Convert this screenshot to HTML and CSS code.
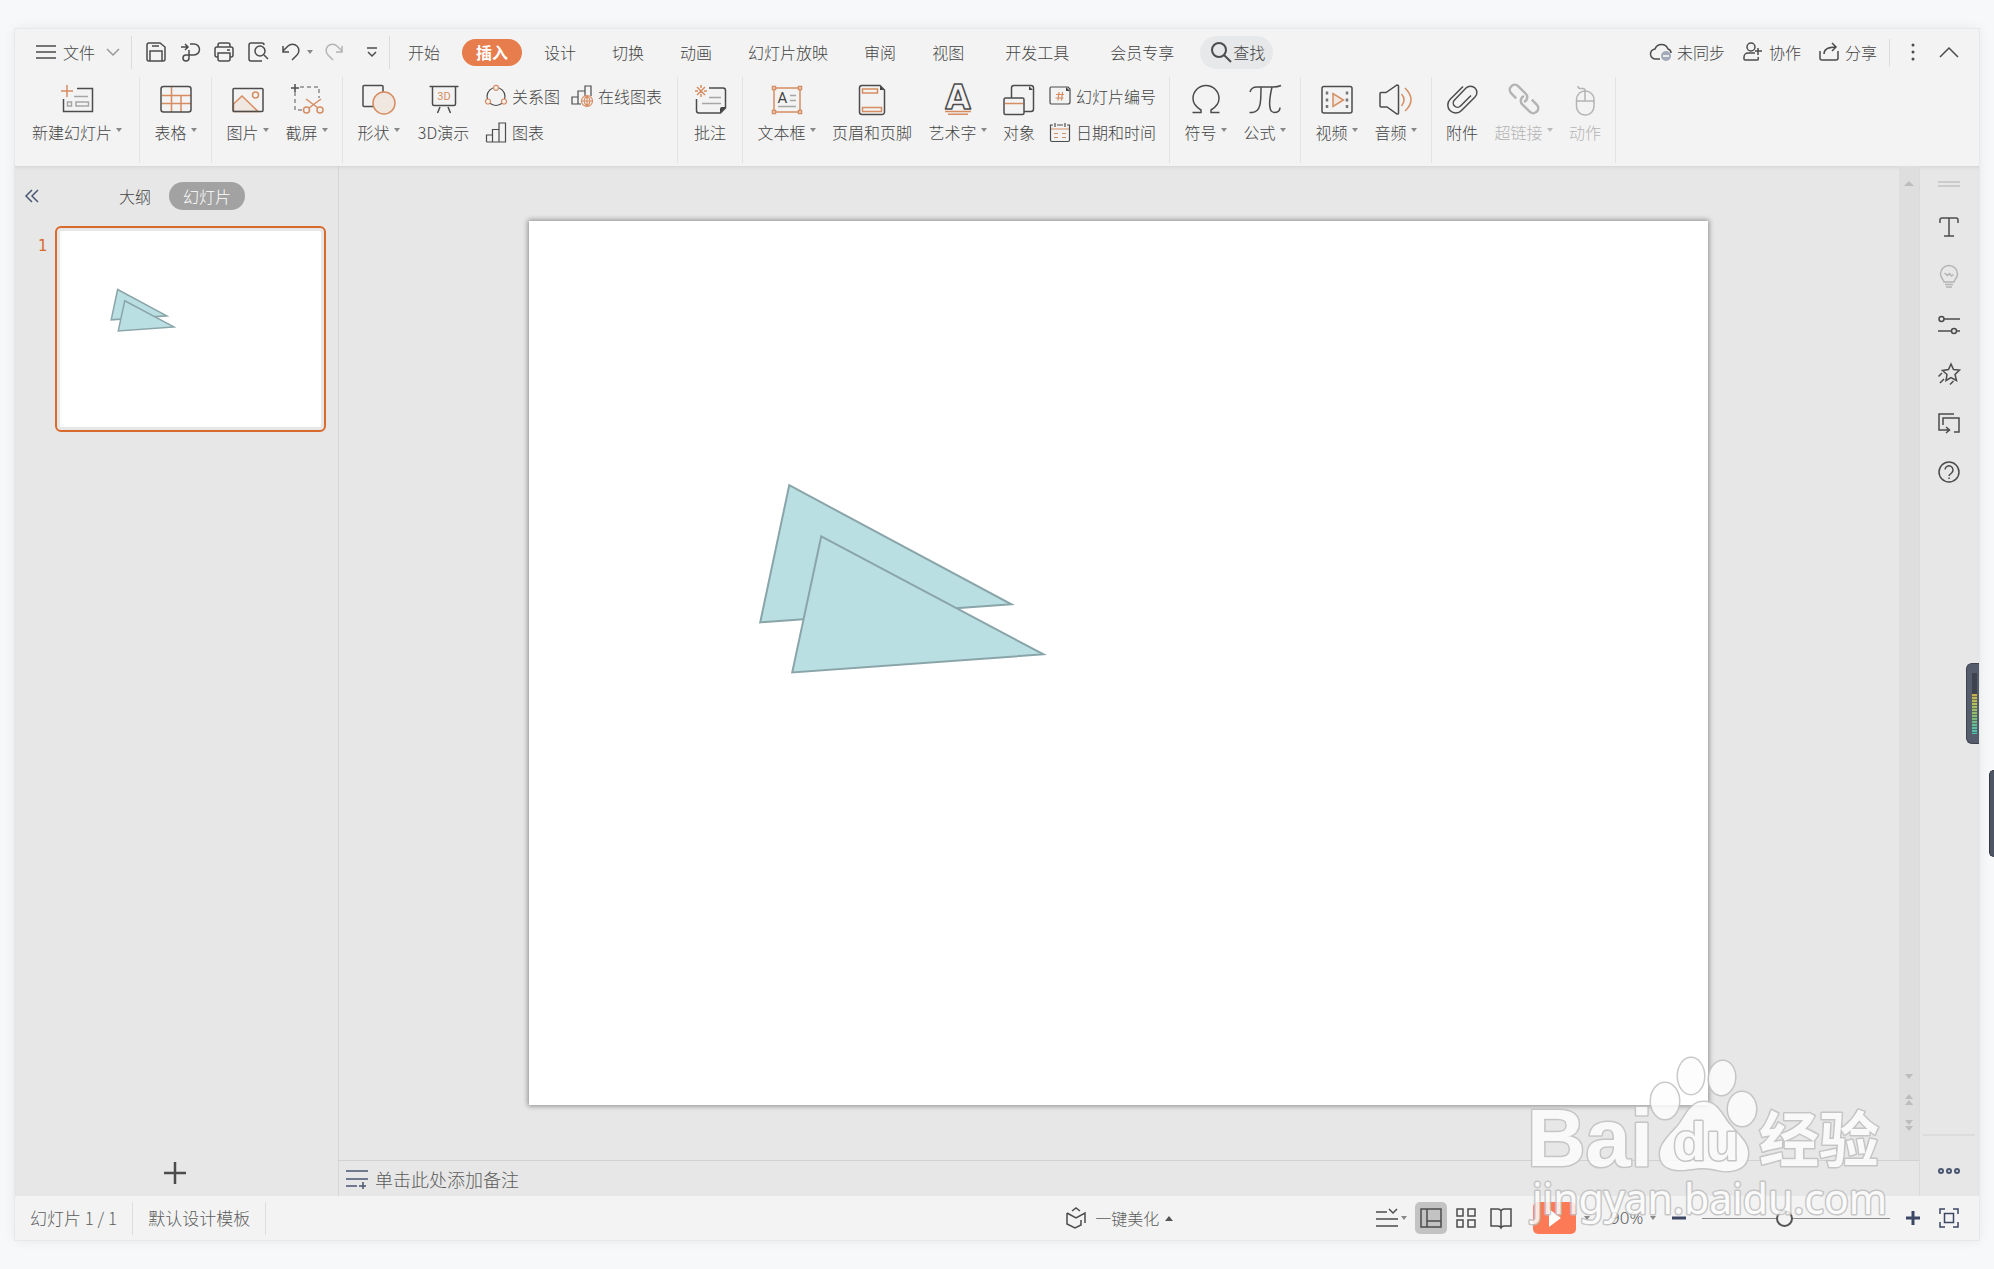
FILE: index.html
```html
<!DOCTYPE html>
<html lang="zh-CN">
<head>
  <meta charset="UTF-8">
  <meta name="viewport" content="width=device-width, initial-scale=1.0">
  <title>演示文稿</title>
  <link rel="stylesheet" href="styles.css">
</head>
<body>
  <div class="app">
    <!-- Menu bar -->
    <header class="menubar">
      <button class="file-menu">
        <svg width="20" height="20" viewBox="0 0 20 20"><path d="M0 4h20M0 10h20M0 16h20"/></svg>
        <span>文件</span>
        <svg class="chevron" width="14" height="10" viewBox="0 0 14 10"><path d="M1 2l6 6 6-6"/></svg>
      </button>
      <span class="divider"></span>
      <div class="quick">
        <button aria-label="保存"><svg width="20" height="20" viewBox="0 0 20 20"><path d="M3 1h11l5 4v12a2 2 0 0 1-2 2H3a2 2 0 0 1-2-2V3a2 2 0 0 1 2-2zM4 19V9h12v10M6 4h7"/></svg></button>
        <button aria-label="输出为PDF"><svg width="20" height="20" viewBox="0 0 20 20"><path d="M1 5h7M5 2l3 3-3 3M10 2h4a5.500 5.500 0 0 1 0 11H6a3 3 0 1 0 3 3V8"/></svg></button>
        <button aria-label="打印"><svg width="20" height="20" viewBox="0 0 20 20"><path d="M4 5V3a2 2 0 0 1 2-2h8a2 2 0 0 1 2 2v2M4 15H3a2 2 0 0 1-2-2V7a2 2 0 0 1 2-2h14a2 2 0 0 1 2 2v6a2 2 0 0 1-2 2h-1M4 11h12v6a2 2 0 0 1-2 2H6a2 2 0 0 1-2-2zM13 8h3"/></svg></button>
        <button aria-label="打印预览"><svg width="20" height="20" viewBox="0 0 20 20"><path d="M16 3a2 2 0 0 0-2-2H3a2 2 0 0 0-2 2v14a2 2 0 0 0 2 2h11M16 13l4 4"/><circle cx="12" cy="9" r="5"/></svg></button>
        <button class="undo" aria-label="撤销"><svg width="18" height="20" viewBox="0 0 18 20"><path d="M1 4v6h6M1 9l5-5a6 6 0 0 1 9 9l-5 5"/></svg></button>
        <span class="caret"></span>
        <button class="redo off" aria-label="恢复"><svg width="18" height="20" viewBox="0 0 18 20"><path d="M17 4v6h-6M17 9l-5-5a6 6 0 0 0-9 9l5 5"/></svg></button>
        <button aria-label="自定义快速访问"><svg width="12" height="12" viewBox="0 0 12 12"><path d="M1 2h10M2 6l4 4 4-4"/></svg></button>
      </div>
      <span class="divider"></span>
      <nav class="tabs">
        <button>开始</button>
        <button class="active">插入</button>
        <button>设计</button>
        <button>切换</button>
        <button>动画</button>
        <button>幻灯片放映</button>
        <button>审阅</button>
        <button>视图</button>
        <button class="extra">开发工具</button>
        <button class="extra">会员专享</button>
      </nav>
      <button class="search">
        <svg width="22" height="22" viewBox="0 0 22 22"><circle cx="9" cy="9" r="7"/><path d="M14 14l7 7"/></svg>查找
      </button>
      <div class="account">
        <button>
          <svg width="22" height="20" viewBox="0 0 22 20"><path d="M10 17H6a5 5 0 0 1-1-10 7 7 0 0 1 13 0 4 4 0 0 1 3 4"/><circle class="badge" cx="16" cy="14" r="5"/><path class="minus" d="M13 14h6"/></svg>
          未同步
        </button>
        <button>
          <svg width="22" height="20" viewBox="0 0 22 20"><circle cx="9" cy="5" r="4"/><path d="M13 11H6a4 4 0 0 0-4 4v2q0 1 1 1h12q2 0 1-3M13 9h7M16 6v7"/></svg>
          协作
        </button>
        <button>
          <svg width="22" height="20" viewBox="0 0 22 20"><path d="M2 9v7a2 2 0 0 0 2 2h14a2 2 0 0 0 2-2V9M6 12c0-5 4-7 12-7M14 1l4 4-4 4"/></svg>
          分享
        </button>
      </div>
      <span class="divider short"></span>
      <button class="dots" aria-label="更多"><svg width="4" height="20" viewBox="0 0 4 20"><circle cx="2" cy="3" r="1.500"/><circle cx="2" cy="10" r="1.500"/><circle cx="2" cy="17" r="1.500"/></svg></button>
      <button class="fold" aria-label="收起功能区"><svg width="20" height="12" viewBox="0 0 20 12"><path d="M1 11l9-9 9 9"/></svg></button>
    </header>

    <!-- Ribbon -->
    <section class="ribbon">
      <div class="group roomy">
        <button class="tool w-xl">
          <svg width="32" height="32" viewBox="0 0 32 32"><path class="or" d="M0 8h12M6 2v12"/><path class="lt" d="M13 13.500h14M6.500 19h4v4h-4zM15 19h12.500v4H15z"/><path d="M16 5.500h15.500v23h-29V16"/></svg>
          <span class="label">新建幻灯片<i class="caret"></i></span>
        </button>
      </div>
      <div class="group">
        <button class="tool w-s">
          <svg width="32" height="32" viewBox="0 0 32 32"><path class="or" d="M11.500 4v25M21 12v17M2 12.500h29M2 20.500h29"/><rect x="1" y="3.500" width="30" height="25.500" rx="2.500"/></svg>
          <span class="label">表格<i class="caret"></i></span>
        </button>
      </div>
      <div class="group">
        <button class="tool w-s">
          <svg width="32" height="32" viewBox="0 0 32 32"><path class="or tint" d="M1.500 21l8.500-8 16 15.500H1.500z"/><circle class="or" cx="23.500" cy="12" r="3"/><rect x="1" y="5.500" width="30" height="23" rx="1"/></svg>
          <span class="label">图片<i class="caret"></i></span>
        </button>
        <button class="tool w-s">
          <svg width="32" height="32" viewBox="0 0 32 32"><path class="dash" d="M9 4h19v11M4 9v18h8"/><path d="M0 5h8M4 1v8"/><g class="or"><circle cx="15.500" cy="27" r="3"/><circle cx="29" cy="27" r="3"/><path d="M15 16l12 9M30 16l-12 9"/></g></svg>
          <span class="label">截屏<i class="caret"></i></span>
        </button>
      </div>
      <div class="group">
        <button class="tool w-s">
          <svg width="34" height="32" viewBox="0 0 34 32"><rect x="1" y="2.500" width="20" height="21" rx="1"/><circle class="or tint solid" cx="22" cy="20" r="11"/></svg>
          <span class="label">形状<i class="caret"></i></span>
        </button>
        <button class="tool w-m">
          <svg width="32" height="32" viewBox="0 0 32 32"><path d="M1.500 3.500h29M4.500 4v17q0 1.500 1.500 1.500h20q1.500 0 1.500-1.500V4M12 24l-2.500 6M20 24l2.500 6"/><text class="or-text" x="16" y="17" text-anchor="middle">3D</text></svg>
          <span class="label">3D演示</span>
        </button>
        <div class="stack two">
          <button><svg width="22" height="22" viewBox="0 0 22 22"><circle cx="11" cy="11.500" r="9"/><g class="or solid"><circle cx="11" cy="2.800" r="2.500"/><circle cx="3" cy="16.500" r="2.500"/><circle cx="19" cy="16.500" r="2.500"/></g></svg>关系图</button>
          <button><svg width="22" height="22" viewBox="0 0 22 22"><path d="M10 19H1v-7h6M7 19V6h7v5M14 8V1h6v10"/><g class="or solid"><circle cx="16" cy="16" r="5.500"/><path d="M10.500 16h11M16 10.500v11M16 10.500c-4 4-4 7 0 11M16 10.500c4 4 4 7 0 11"/></g></svg>在线图表</button>
          <button><svg width="22" height="22" viewBox="0 0 22 22"><path d="M1.500 21v-7h6M7.500 21V8.500h6.500M14 21V2h6.500v19z M1.500 21H14"/></svg>图表</button>
        </div>
      </div>
      <div class="group roomy">
        <button class="tool w-xs">
          <svg width="32" height="32" viewBox="0 0 32 32"><path class="or" d="M7 2v3M7 11v3M1 8h3M10 8h3M3 4l8 8M11 4l-8 8"/><path class="lt" d="M15 14.500h12M8 20.500h19"/><path d="M15 5h14a2.500 2.500 0 0 1 2.500 2.500V25l-5 5H5a2.500 2.500 0 0 1-2.500-2.500V16"/><path class="dark" d="M31 24v1l-5 5v-4q0-2 2-2z"/></svg>
          <span class="label">批注</span>
        </button>
      </div>
      <div class="group">
        <button class="tool w-l">
          <svg width="32" height="32" viewBox="0 0 32 32"><path class="lt" d="M19 12.500h6M19 17.500h6M7 23.500h18"/><g class="or"><rect x="3" y="5" width="26" height="24"/><g class="solid"><path d="M1.500 3.500h3v3h-3zM27.500 3.500h3v3h-3zM1.500 27.500h3v3h-3zM27.500 27.500h3v3h-3z"/></g></g><text class="dk-text" x="11.500" y="20" text-anchor="middle">A</text></svg>
          <span class="label">文本框<i class="caret"></i></span>
        </button>
        <button class="tool w-2l">
          <svg width="32" height="32" viewBox="0 0 32 32"><path class="or" d="M6.500 6h15v4h-15zM6.500 24.500h19v4h-19z"/><path d="M6 2.500h18l4.500 4.500v22a2.500 2.500 0 0 1-2.500 2.500H6A2.500 2.500 0 0 1 3.500 29V5A2.500 2.500 0 0 1 6 2.500z"/><path class="dark" d="M24 3v4h4z"/></svg>
          <span class="label">页眉和页脚</span>
        </button>
        <button class="tool w-l">
          <svg width="32" height="32" viewBox="0 0 32 32"><text class="art-text" x="16" y="26" text-anchor="middle">A</text><path class="or" d="M3 28.500h26M6 31.200h20"/></svg>
          <span class="label">艺术字<i class="caret"></i></span>
        </button>
        <button class="tool w-xs">
          <svg width="32" height="32" viewBox="0 0 32 32"><rect x="8.500" y="2.500" width="22" height="26" rx="2.500"/><path class="dark" d="M26 3v4h4z"/><rect class="solid" x="1" y="15" width="20" height="16.500" rx="1.500"/><path class="or" d="M2 20.500h18"/></svg>
          <span class="label">对象</span>
        </button>
        <div class="stack">
          <button><svg width="22" height="22" viewBox="0 0 22 22"><path d="M2 2h17l2 2v13q0 2-2 2H2q-1 0-1-2V4q0-2 1-2z"/><path class="dark" d="M17 2v4h4z"/><path class="or" d="M7 9.500h8M6.500 13h8M10 7l-1 8.500M13.500 7l-1 8.500"/></svg>幻灯片编号</button>
          <button><svg width="22" height="22" viewBox="0 0 22 22"><path class="or" d="M2 8h18M5 12.500h4M5 16.500h4M13 12.500h4M13 16.500h4"/><path d="M4 4H1.500v15q0 1.500 1.500 1.500h16q1.500 0 1.500-1.500V4H18M8 4h6M6 2v4M16 2v4"/></svg>日期和时间</button>
        </div>
      </div>
      <div class="group">
        <button class="tool w-s">
          <svg width="32" height="32" viewBox="0 0 32 32"><path d="M2.500 29.500H11V27C6 24 3 20 3 15.500a13 13 0 1 1 26 0C29 20 26 24 21 27v2.500h8.500"/></svg>
          <span class="label">符号<i class="caret"></i></span>
        </button>
        <button class="tool w-s">
          <svg width="34" height="32" viewBox="0 0 34 32"><path d="M2 9c1-4 3-5 7-5h16q5 0 8-1.500M13 4c0 15 0 25-9 25.500H1.500M24 4c-3 13-4 25 2 25.500 4 0 6-2 6-5"/></svg>
          <span class="label">公式<i class="caret"></i></span>
        </button>
      </div>
      <div class="group">
        <button class="tool w-s">
          <svg width="32" height="32" viewBox="0 0 32 32"><rect x="1" y="3.500" width="30" height="26.500" rx="2"/><path class="or tint" d="M12 10.500v13l10.500-6.500z"/><path class="film" d="M6 8.500v3M6 15.500v3M6 22v3M26 8.500v3M26 15.500v3M26 22v3"/></svg>
          <span class="label">视频<i class="caret"></i></span>
        </button>
        <button class="tool w-s">
          <svg width="34" height="32" viewBox="0 0 34 32"><path d="M1 10.500q0-1 1-1h5l11-7.500q1.500 0 1.500 1v27q0 1.500-1.500 1L8 24H2q-1 0-1-1z"/><path class="or" d="M22.500 11q5 5.500 0 12M26 5q12 12 0 23"/></svg>
          <span class="label">音频<i class="caret"></i></span>
        </button>
      </div>
      <div class="group">
        <button class="tool w-xs">
          <svg width="32" height="32" viewBox="0 0 32 32"><path d="M17 3.500L4 16.500a7.500 7.500 0 0 0 11.500 11L29 14A6 6 0 0 0 20 5L8.500 17a3.800 3.800 0 0 0 6 6L25 12.500"/></svg>
          <span class="label">附件</span>
        </button>
        <button class="tool w-l off">
          <svg width="32" height="32" viewBox="0 0 32 32"><g class="thick" transform="rotate(45 16 16)"><path d="M10 21H3a5 5 0 0 1 0-10h10a5 5 0 0 1 5 7"/><path d="M22 11h7a5 5 0 0 1 0 10H19a5 5 0 0 1-5-7"/></g></svg>
          <span class="label">超链接<i class="caret"></i></span>
        </button>
        <button class="tool w-xs off">
          <svg width="32" height="32" viewBox="0 0 32 32"><rect x="7.500" y="8" width="17.500" height="24" rx="8.500"/><path d="M8 18h17M16 18V8c0-2 0-2-2-2.500H11c-1.500 0-2-1-2-2.500"/></svg>
          <span class="label">动作</span>
        </button>
      </div>
    </section>

    <div class="workspace">
      <!-- Slide list -->
      <aside class="outline">
        <div class="outline-head">
          <button class="collapse" aria-label="折叠"><svg width="16" height="14" viewBox="0 0 16 14"><path d="M8 1L2 7l6 6M14 1L8 7l6 6"/></svg></button>
          <button class="view">大纲</button>
          <button class="view active">幻灯片</button>
        </div>
        <div class="thumb-row">
          <span class="thumb-no">1</span>
          <button class="thumb" aria-label="第 1 张幻灯片">
            <svg viewBox="0 0 1178 883"><path d="M260 264l222 119-251 18z"/><path d="M292 315l222 118-251 18z"/></svg>
          </button>
        </div>
        <button class="add" aria-label="新建"><svg width="22" height="22" viewBox="0 0 22 22"><path d="M0 11h22M11 0v22"/></svg></button>
      </aside>

      <!-- Canvas -->
      <main class="editor">
        <div class="canvas-row">
          <div class="stage">
            <svg class="slide" viewBox="0 0 1178 883"><path d="M260 264l222 119-251 18z"/><path d="M292 315l222 118-251 18z"/></svg>
          </div>
          <div class="scroll">
            <svg width="10" height="6" viewBox="0 0 10 6"><path d="M5 0l5 5H0z"/></svg>
            <div class="scroll-end">
              <svg width="8" height="6" viewBox="0 0 8 6"><path d="M4 5L0 0h8z"/></svg>
              <svg width="8" height="12" viewBox="0 0 8 12"><path d="M4 0l4 5H0zM4 6l4 5H0z"/></svg>
              <svg width="8" height="12" viewBox="0 0 8 12"><path d="M4 5L0 0h8zM4 11L0 6h8z"/></svg>
            </div>
          </div>
        </div>
        <label class="notes">
          <svg width="22" height="20" viewBox="0 0 22 20"><path d="M0 2h22M0 10h22M0 17h11M13 17h7M17 13v7"/></svg>
          <input type="text" placeholder="单击此处添加备注" aria-label="备注">
        </label>
      </main>

      <!-- Side tools -->
      <aside class="side">
        <svg class="grip" width="22" height="6" viewBox="0 0 22 6"><path d="M0 1h22M0 5h22"/></svg>
        <button aria-label="文本"><svg width="22" height="22" viewBox="0 0 22 22"><path d="M2 7V4q0-2 2-2h14q2 0 2 2v3M11 2v18M6 20h10"/></svg></button>
        <button class="off" aria-label="智能特性"><svg width="22" height="22" viewBox="0 0 22 22"><path d="M6 17c0-2-3.500-4-3.500-8a8.500 8.500 0 0 1 17 0c0 4-3.500 6-3.500 8zM7 19.500h8M8 22h6M6.500 8l3 2.500 2-2 2 2.500 2-1.500"/></svg></button>
        <button aria-label="对象属性"><svg width="22" height="22" viewBox="0 0 22 22"><circle cx="3.500" cy="5" r="2.500"/><circle cx="16" cy="17" r="2.500"/><path d="M6 5h16M0 17h13M19 17h3"/></svg></button>
        <button aria-label="自定义动画"><svg width="22" height="22" viewBox="0 0 22 22"><path d="M13 1l2.500 5.500 6 .5-4.500 4.500 1.500 6-5.500-3-5 3 1-6L4.500 7.500l6-1zM4 10l-3.500 3.500M6 16l-4 4M15.500 18L12 21.500"/></svg></button>
        <button aria-label="幻灯片切换"><svg width="22" height="22" viewBox="0 0 22 22"><path d="M16 2H1v16h10M8 15l3.500 3L8 21M5 13V6h16v14h-5"/></svg></button>
        <button aria-label="帮助"><svg width="22" height="22" viewBox="0 0 22 22"><circle cx="11" cy="11" r="10"/><path d="M7 8.500a4 4 0 1 1 6.500 3.500c-2 1.500-2.500 2-2.500 3M11 16.500v1.500"/></svg></button>
        <button class="more" aria-label="更多工具"><svg width="22" height="8" viewBox="0 0 22 8"><circle cx="3" cy="4" r="2"/><circle cx="11" cy="4" r="2"/><circle cx="19" cy="4" r="2"/></svg></button>
      </aside>
    </div>

    <!-- Status bar -->
    <footer class="status">
      <span class="cell">幻灯片 1 / 1</span>
      <span class="cell">默认设计模板</span>
      <span class="grow-l"></span>
      <button class="beautify">
        <svg width="22" height="22" viewBox="0 0 22 22"><path d="M7 4l4-3 4 3M2 6v11l8 4 6-3v-5M2 6l9 5 9-5v10"/></svg>
        一键美化<i class="caret up"></i>
      </button>
      <span class="grow-r"></span>
      <div class="views">
        <button class="list" aria-label="显示备注"><svg width="22" height="20" viewBox="0 0 22 20"><path d="M0 4h11M0 11h22M0 18h22M13 1l4 4 4-4"/></svg><i class="caret"></i></button>
        <button class="active" aria-label="普通视图"><svg width="22" height="22" viewBox="0 0 22 22"><path d="M1 2h20v18H1zM7 2v18M7 14h14"/></svg></button>
        <button aria-label="幻灯片浏览"><svg width="22" height="22" viewBox="0 0 22 22"><path d="M2 2h6v7H2zM13 2h7v7h-7zM2 13h6v7H2zM13 13h7v7h-7z"/></svg></button>
        <button aria-label="阅读视图"><svg width="22" height="22" viewBox="0 0 22 22"><path d="M11 4q-1-2-3-2H1v17h7q2 0 3 2 1-2 3-2h7V2h-7q-2 0-3 2zM11 4v17"/></svg></button>
      </div>
      <button class="play" aria-label="放映"><svg width="14" height="20" viewBox="0 0 14 20"><path d="M1 1l12 9-12 9z"/></svg></button>
      <i class="caret"></i>
      <select class="zoom" aria-label="显示比例"><option>90%</option></select>
      <i class="caret"></i>
      <button class="step" aria-label="缩小"><svg width="14" height="14" viewBox="0 0 14 14"><path d="M0 7h14"/></svg></button>
      <input class="slider" type="range" min="0" max="100" value="43" aria-label="缩放">
      <button class="step" aria-label="放大"><svg width="14" height="14" viewBox="0 0 14 14"><path d="M0 7h14M7 0v14"/></svg></button>
      <button class="fit" aria-label="最佳显示比例"><svg width="20" height="20" viewBox="0 0 20 20"><path d="M1 6V1h5M14 1h5v5M19 14v5h-5M6 19H1v-5M5.500 5.500h9v9h-9z"/></svg></button>
    </footer>

    <div class="meter"><div class="meter-bars"></div></div>
  </div>

  <div class="edge-tab"></div>

  <!-- Watermark -->
  <svg class="watermark" width="380" height="180" viewBox="0 0 380 180">
    <text class="wm-bai" x="17" y="117">Bai</text>
    <ellipse cx="155" cy="52" rx="14" ry="18"/>
    <ellipse cx="181" cy="27" rx="13" ry="18"/>
    <ellipse cx="212" cy="29" rx="13" ry="17" transform="rotate(6 212 29)"/>
    <ellipse cx="232" cy="60" rx="14" ry="17"/>
    <path d="M194 53c-14 0-18 14-26 24-10 11-18 18-18 28 0 11 8 16 20 16 9 0 14-2 24-2s17 4 25 3c11-1 19-6 19-18 0-11-10-18-18-28-8-9-12-23-26-23z"/>
    <text class="wm-du" x="163" y="111">du</text>
    <text class="wm-cn" x="249" y="113">经验</text>
    <text class="wm-url" x="22" y="165">jingyan.baidu.com</text>
  </svg>
</body>
</html>
```
FILE: styles.css
```css
* {
  box-sizing: border-box;
}

body {
  position: relative;
  margin: 0;
  padding: 29px 15px;
  min-height: 100vh;
  display: flex;
  overflow-x: hidden;
  background: #f7f8fa;
  color: #444;
  font-family: "Noto Sans CJK SC", sans-serif;
  font-size: 16px;
  font-weight: 300;
  line-height: 20px;
}

button,
input,
select {
  margin: 0;
  padding: 0;
  border: none;
  background: none;
  color: inherit;
  font: inherit;
}

button {
  display: flex;
  align-items: center;
  justify-content: center;
  white-space: nowrap;
  cursor: pointer;
}

svg {
  flex: none;
  fill: none;
  stroke: #4c4c4c;
  stroke-width: 1.5;
  overflow: visible;
}

.app {
  position: relative;
  flex: 1;
  min-width: 0;
  display: flex;
  flex-direction: column;
  background: #f3f3f3;
  box-shadow: 0 0 0 1px #e6e8ea, 0 0 12px rgba(0, 0, 0, 0.08);
}

.caret {
  flex: none;
  display: inline-block;
  border: 3px solid transparent;
  border-top: 4px solid #888;
  border-bottom: none;
}

.caret.up {
  border: 4px solid transparent;
  border-bottom: 5px solid #555;
  border-top: none;
}

.off {
  color: #b4b4b4;
}

.off svg {
  stroke: #b4b4b4;
}

.off .caret {
  border-top-color: #bcbcbc;
}

/* Menu bar */
.menubar {
  display: flex;
  align-items: center;
  height: 46px;
}

.divider {
  width: 1px;
  height: 33px;
  background: #dcdcdc;
}

.divider.short {
  height: 27px;
  margin-left: 12px;
}

.file-menu {
  gap: 7px;
  padding: 0 11px 0 21px;
}

.chevron {
  margin-left: 4px;
  stroke: #999;
}

.quick {
  display: flex;
  align-items: center;
  padding-left: 7px;
}

.quick button {
  width: 34px;
}

.quick .undo {
  width: 32px;
}

.quick .redo {
  width: 42px;
}

.tabs {
  display: flex;
}

.tabs button {
  height: 27px;
  margin: 0 4px;
  padding: 0 14px;
  border-radius: 14px;
}

.tabs .extra {
  margin-left: 9px;
}

.tabs .active {
  background: #e77c4c;
  color: #fff;
  font-weight: 700;
}

.search {
  gap: 1px;
  height: 33px;
  margin-left: 8px;
  padding: 0 8px 0 10px;
  border-radius: 17px;
  background: #e6e8e9;
}

.search svg {
  stroke-width: 2;
}

.account {
  display: flex;
  gap: 17px;
  margin-left: auto;
}

.account button {
  gap: 5px;
}

.badge {
  fill: #a3aaba;
  stroke: none;
}

.minus {
  stroke: #fff;
}

.dots {
  margin-left: 21px;
}

.dots svg {
  fill: #4c4c4c;
  stroke: none;
}

.fold {
  margin: 0 20px 0 24px;
}

/* Ribbon */
.ribbon {
  display: flex;
  height: 91px;
  padding: 2px 0 3px;
}

.group {
  display: flex;
  align-items: flex-start;
  padding: 0 6px;
  border-right: 1px solid #e3e3e3;
}

.group.roomy {
  padding: 0 8px;
}

.tool {
  flex-direction: column;
  gap: 7px;
  padding-top: 6px;
}

.w-xs { width: 48px; }
.w-s { width: 59px; }
.w-m { width: 71px; }
.w-l { width: 75px; }
.w-2l { width: 96px; }
.w-xl { width: 108px; }

.label {
  display: flex;
  align-items: center;
  gap: 4px;
}

.label .caret {
  margin-bottom: 4px;
}

.or {
  stroke: #d68d62;
}

.tint {
  fill: #f1e7e1;
}

.solid {
  fill: #f3f3f3;
}

.tint.solid {
  fill: #f1e7e1;
}

.lt {
  stroke: #a6a6a6;
}

.dark {
  fill: #444;
  stroke: none;
}

.dash {
  stroke: #8a8a8a;
  stroke-dasharray: 4 3;
}

.film {
  stroke: #777;
  stroke-width: 2.5;
}

.thick {
  stroke-width: 2.5;
}

.or-text {
  fill: #d68d62;
  stroke: none;
  font: 11px Roboto, sans-serif;
}

.dk-text {
  fill: #444;
  stroke: none;
  font: 15px Roboto, sans-serif;
}

.art-text {
  font: 700 33px "DejaVu Sans", sans-serif;
  stroke-linejoin: round;
}

.stack {
  display: grid;
  grid-auto-rows: 36px;
  column-gap: 11px;
  padding: 1px 7px 0 6px;
}

.stack.two {
  grid-template-columns: auto auto;
  padding-right: 9px;
}

.stack svg {
  stroke-width: 1.2;
}

.stack button {
  justify-content: flex-start;
  gap: 5px;
}

/* Workspace */
.workspace {
  flex: 1;
  display: flex;
  background: #e7e7e7;
  box-shadow: inset 0 3px 3px -1px #d8d8d8;
}

.outline {
  width: 324px;
  display: flex;
  flex-direction: column;
  border-right: 1px solid #d6d6d6;
}

.outline-head {
  display: flex;
  align-items: center;
  padding: 16px 9px;
}

.collapse {
  margin-right: 65px;
}

.collapse svg,
.notes svg,
.more svg {
  stroke: #4b5672;
}

.view {
  height: 28px;
  padding: 0 14px;
  border-radius: 14px;
}

.view.active {
  margin-left: 4px;
  background: #a2a2a2;
  color: #fff;
}

.thumb-row {
  display: flex;
  gap: 7px;
  padding: 0 12px 0 23px;
}

.thumb-no {
  width: 10px;
  padding-top: 10px;
  color: #d86a2c;
  font-family: "DejaVu Sans", sans-serif;
  font-size: 15px;
  font-weight: 400;
}

.thumb {
  flex: 1;
  padding: 3px;
  border: 2px solid #d86a2c;
  border-radius: 6px;
}

.thumb svg {
  width: 100%;
  background: #fff;
}

.thumb path,
.slide path {
  fill: #badfe2;
  stroke: #8aa5a9;
  vector-effect: non-scaling-stroke;
}

.add {
  margin: auto auto 12px 149px;
}

.add svg {
  stroke-width: 2.5;
}

.editor {
  flex: 1;
  display: flex;
  flex-direction: column;
  min-width: 0;
}

.canvas-row {
  flex: 1;
  display: flex;
}

.stage {
  flex: 1;
  padding: 55px 191px 55px 190px;
}

.slide {
  display: block;
  width: 100%;
  background: #fff;
  box-shadow: 0 0 5px 1px rgba(0, 0, 0, 0.4);
}

.slide path {
  stroke-width: 2;
}

.scroll {
  width: 20px;
  display: flex;
  flex-direction: column;
  align-items: center;
  justify-content: space-between;
  padding: 15px 0 28px;
  background: #dedede;
}

.scroll svg {
  fill: #bdbdbd;
  stroke: none;
}

.scroll-end {
  display: flex;
  flex-direction: column;
  align-items: center;
  gap: 14px;
}

.notes {
  display: flex;
  align-items: center;
  gap: 7px;
  height: 36px;
  padding: 0 7px;
  border-top: 1px solid #d2d2d2;
}

.notes input {
  flex: 1;
  height: 30px;
  font-size: 18px;
  outline: none;
}

.notes input::placeholder {
  color: #5c5c5c;
}

.side {
  width: 60px;
  display: flex;
  flex-direction: column;
  align-items: center;
  padding-right: 2px;
  border-left: 1px solid #dadada;
}

.side button {
  width: 52px;
  height: 49px;
}

.grip {
  margin: 15px 0;
  stroke: #c4c4c4;
}

.side .more {
  height: 62px;
  margin-top: auto;
  border-top: 2px solid #dcdcdc;
}

.more svg {
  stroke-width: 2;
  margin-top: 10px;
}

/* Status bar */
.status {
  display: flex;
  align-items: center;
  height: 44px;
  padding-right: 20px;
  color: #5c5c5c;
}

.cell {
  height: 33px;
  padding: 6px 15px;
  border-right: 1px solid #dedede;
  font-size: 17px;
}

.grow-l {
  flex: 4;
}

.grow-r {
  flex: 1;
}

.beautify {
  gap: 8px;
}

.beautify .caret {
  margin-left: -2px;
}

.views {
  display: flex;
  align-items: center;
  gap: 3px;
}

.views button {
  width: 32px;
  height: 32px;
  border-radius: 5px;
}

.views .list {
  width: 36px;
  margin-right: 3px;
  gap: 3px;
}

.views .active {
  background: #c3c3c3;
}

.play {
  width: 43px;
  height: 32px;
  margin: 0 8px 0 16px;
  border-radius: 5px;
  background: #fd7a57;
}

.play svg {
  fill: #fff;
  stroke: none;
}

.zoom {
  margin: 0 6px 0 20px;
  appearance: none;
  font-family: "Noto Sans", sans-serif;
  font-size: 17px;
}

.step {
  margin-left: 16px;
}

.step svg {
  stroke: #3c4766;
  stroke-width: 3;
}

.slider {
  width: 188px;
  height: 20px;
  margin-left: 16px;
  appearance: none;
}

.slider::-webkit-slider-runnable-track {
  height: 1px;
  background: #8c8c8c;
}

.slider::-webkit-slider-thumb {
  appearance: none;
  width: 17px;
  height: 17px;
  margin-top: -8px;
  border: 2px solid #555;
  border-radius: 50%;
  background: #f3f3f3;
}

.fit {
  margin-left: 19px;
}

.fit svg {
  stroke: #3c4766;
}

/* Floating pieces */
.meter {
  position: absolute;
  right: 0;
  top: 634px;
  width: 13px;
  height: 81px;
  padding: 9px 2px 9px 5px;
  border: 1px solid #3f434d;
  border-right: none;
  border-radius: 6px 0 0 6px;
  background: #555c6b;
}

.meter-bars {
  height: 100%;
  background:
    repeating-linear-gradient(transparent 0 2px, rgba(60, 66, 78, 0.6) 2px 3px),
    linear-gradient(#3f434d 35%, #c9b14c 35%, #b5c05a 50%, #7cba7c 75%, #4fc0b4);
}

.edge-tab {
  position: absolute;
  right: 0;
  top: 770px;
  width: 5px;
  height: 87px;
  border: 1px solid #33363e;
  border-right: none;
  border-radius: 5px 0 0 5px;
  background: #4e5564;
}

.watermark {
  position: absolute;
  right: 104px;
  bottom: 40px;
  fill: #fdfdfd;
  stroke: #c0c0c0;
  stroke-width: 3;
  stroke-linejoin: round;
  paint-order: stroke;
  opacity: 0.85;
  pointer-events: none;
}

.wm-bai {
  font: 700 81px "Liberation Sans", sans-serif;
}

.wm-du {
  font: 700 54px "Liberation Sans", sans-serif;
}

.wm-cn {
  font: 700 60px "Noto Sans CJK SC", sans-serif;
}

.wm-url {
  font: 41px "Noto Sans", sans-serif;
}
```
